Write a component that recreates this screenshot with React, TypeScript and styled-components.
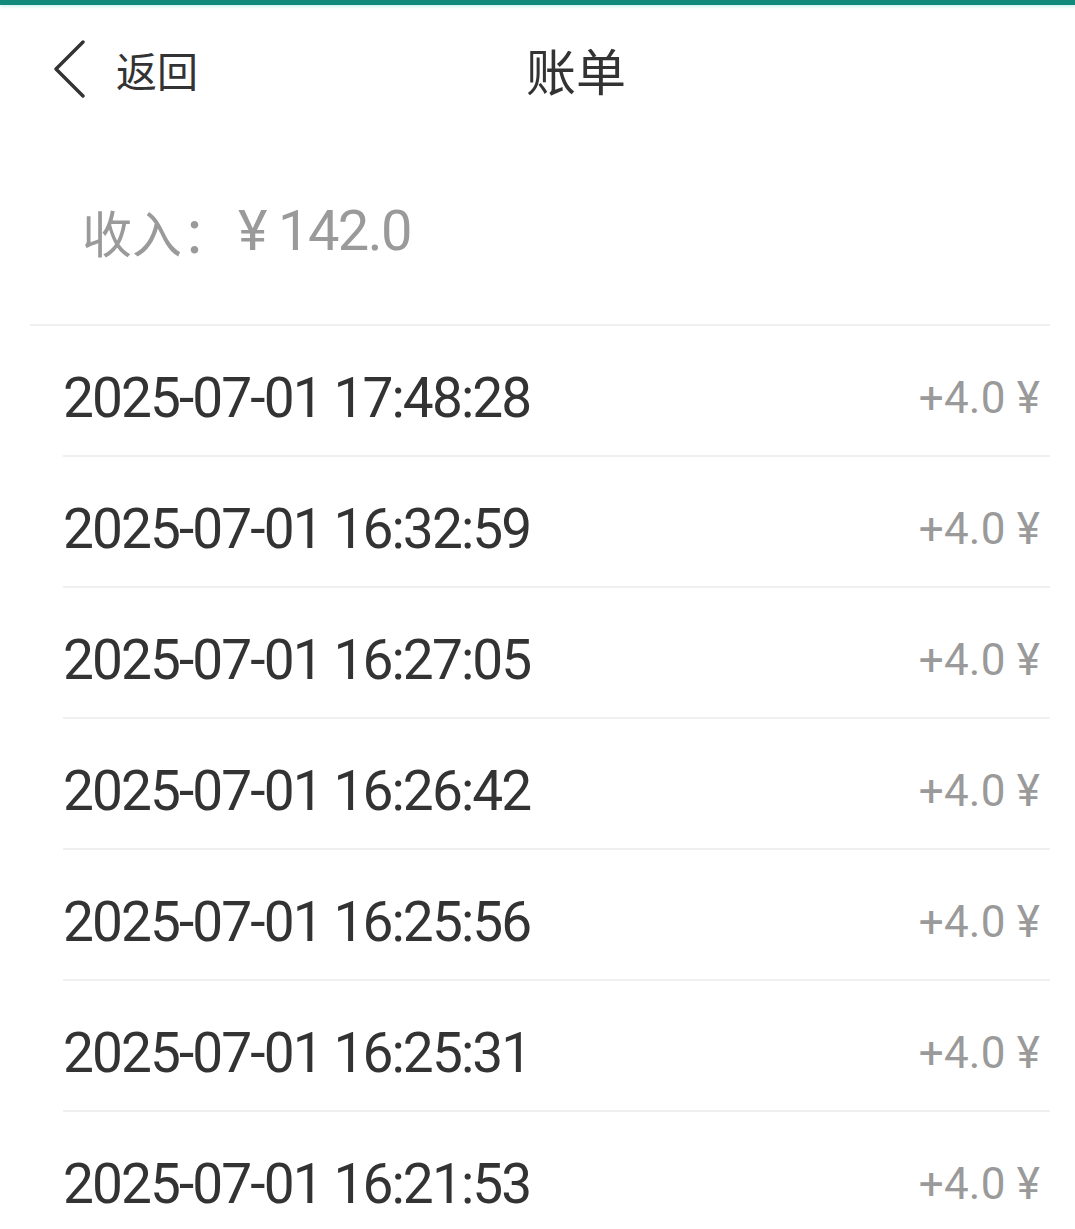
import React from "react";
import styled, { createGlobalStyle } from "styled-components";

const GlobalStyle = createGlobalStyle`
  html, body {
    margin: 0;
    padding: 0;
    background: #ffffff;
  }
  body {
    font-family: "Noto Sans CJK SC", "Noto Sans", sans-serif;
    color: #333333;
  }
`;

const Page = styled.div`
  width: 1075px;
  min-height: 1229px;
  background: #ffffff;
  display: flex;
  flex-direction: column;
`;

const StatusStrip = styled.div`
  height: 5px;
  background: #128a7b;
  box-shadow: 0 2px 3px rgba(120, 220, 215, 0.35);
`;

const Header = styled.header`
  height: 128px;
  display: flex;
  align-items: center;
  padding-left: 52px;
  box-sizing: border-box;
`;

const BackButton = styled.button`
  display: flex;
  align-items: center;
  gap: 30px;
  border: none;
  background: none;
  padding: 0;
  cursor: pointer;
  color: #333333;
`;

const BackLabel = styled.span`
  font-family: "Noto Sans CJK SC", sans-serif;
  font-size: 41px;
  line-height: 1;
  color: #333333;
`;

const Title = styled.h1`
  margin: 0 0 0 328px;
  font-family: "Noto Sans CJK SC", sans-serif;
  font-weight: 400;
  font-size: 50px;
  line-height: 1;
  color: #333333;
`;

const IncomeSection = styled.section`
  height: 193px;
  display: flex;
  align-items: center;
  box-sizing: border-box;
  color: #9a9a9a;
  border-bottom: 2px solid #f0f0f0;
  margin: 0 25px 0 30px;
  padding-left: 52px;
`;

const IncomeLabel = styled.span`
  font-family: "Noto Sans CJK SC", sans-serif;
  font-size: 50px;
  line-height: 1;
  padding-top: 4px;
`;

const IncomeValue = styled.span`
  font-family: "Roboto", sans-serif;
  font-size: 56px;
  letter-spacing: -1.6px;
  line-height: 1;
  margin-left: 6px;
  padding-top: 4px;
`;

const List = styled.ul`
  list-style: none;
  margin: 0 25px 0 63px;
  padding: 0;
`;

const Row = styled.li`
  height: 131px;
  box-sizing: border-box;
  padding-top: 14px;
  display: flex;
  align-items: center;
  justify-content: space-between;
  border-bottom: 2px solid #f0f0f0;
`;

const DateText = styled.span`
  font-family: "Roboto", sans-serif;
  font-size: 55px;
  letter-spacing: -1.9px;
  color: #333333;
`;

const Amount = styled.span`
  font-family: "Roboto", sans-serif;
  font-size: 44px;
  letter-spacing: 0.2px;
  color: #9a9a9a;
  padding-right: 10px;
`;

const records = [
  "2025-07-01 17:48:28",
  "2025-07-01 16:32:59",
  "2025-07-01 16:27:05",
  "2025-07-01 16:26:42",
  "2025-07-01 16:25:56",
  "2025-07-01 16:25:31",
  "2025-07-01 16:21:53",
];

export default function App() {
  return (
    <Page>
      <GlobalStyle />
      <StatusStrip />
      <Header>
        <BackButton>
          <svg width="34" height="58" viewBox="0 0 34 58" fill="none">
            <path
              d="M31 2 L4 29 L31 56"
              stroke="#333333"
              strokeWidth="3.4"
              strokeLinecap="round"
              strokeLinejoin="round"
            />
          </svg>
          <BackLabel>返回</BackLabel>
        </BackButton>
        <Title>账单</Title>
      </Header>
      <IncomeSection>
        <IncomeLabel>收入：</IncomeLabel>
        <IncomeValue>¥ 142.0</IncomeValue>
      </IncomeSection>
      <List>
        {records.map((t) => (
          <Row key={t}>
            <DateText>{t}</DateText>
            <Amount>+4.0 ¥</Amount>
          </Row>
        ))}
      </List>
    </Page>
  );
}
